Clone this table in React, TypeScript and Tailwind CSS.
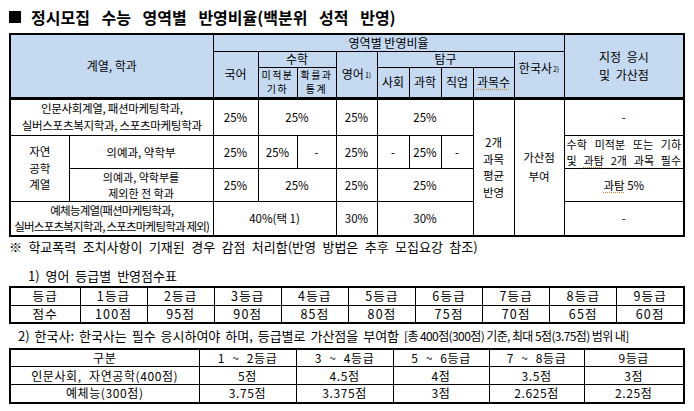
const font = "font-['Noto_Sans_CJK_KR',sans-serif]";
const td = 'border border-black text-center align-middle p-0 font-normal';
const th = 'border border-black text-center align-middle p-0 font-normal bg-[#c5d9f1]';
const dbl = 'border-b-[3px] border-b-double';

const engGrades = ['1등급', '2등급', '3등급', '4등급', '5등급', '6등급', '7등급', '8등급', '9등급'];
const engScores = ['100점', '95점', '90점', '85점', '80점', '75점', '70점', '65점', '60점'];

const khRows = [
  ['구분', '1 ~ 2등급', '3 ~ 4등급', '5 ~ 6등급', '7 ~ 8등급', '9등급'],
  ['인문사회, 자연공학(400점)', '5점', '4.5점', '4점', '3.5점', '3점'],
  ['예체능(300점)', '3.75점', '3.375점', '3점', '2.625점', '2.25점'],
];

function Sup({ children }: { children: string }) {
  return <sup className="text-[7px] relative -top-[1px] ml-[1px]">{children}</sup>;
}

function MainTable() {
  const widths = ['w-[59px]', 'w-[144px]', 'w-[45px]', 'w-[39px]', 'w-[39px]', 'w-[41px]', 'w-[32px]', 'w-[32px]', 'w-[32px]', 'w-[41px]', 'w-[50px]', 'w-[120px]'];
  return (
    <table className="table-fixed border-collapse border-2 border-black w-[674px] ml-[9px] text-[11.5px] leading-[14px]">
      <colgroup>
        {widths.map((w, i) => (
          <col key={i} className={w} />
        ))}
      </colgroup>
      <thead>
        <tr className="h-[17px]">
          <th colSpan={2} rowSpan={3} className={`${th} ${dbl} text-[12px]`}>계열, 학과</th>
          <th colSpan={9} className={`${th} text-[12px]`}>영역별 반영비율</th>
          <th rowSpan={3} className={`${th} ${dbl} text-[12px] leading-[18px] [word-spacing:3px]`}>
            지정 응시
            <br />및 가산점
          </th>
        </tr>
        <tr className="h-[16px]">
          <th rowSpan={2} className={`${th} ${dbl} text-[12px]`}>국어</th>
          <th colSpan={2} className={`${th} text-[12px]`}>수학</th>
          <th rowSpan={2} className={`${th} ${dbl} text-[12px]`}>
            영어<Sup>1)</Sup>
          </th>
          <th colSpan={4} className={`${th} text-[12px]`}>탐구</th>
          <th rowSpan={2} className={`${th} ${dbl} text-[12px] align-top pt-[9px]`}>
            한국사<Sup>2)</Sup>
          </th>
        </tr>
        <tr className="h-[29px]">
          <th className={`${th} ${dbl} text-[10px] leading-[14.5px] tracking-[1.5px]`}>
            미적분
            <br />기하
          </th>
          <th className={`${th} ${dbl} text-[10px] leading-[14.5px] tracking-[1.5px]`}>
            확률과
            <br />통계
          </th>
          <th className={`${th} ${dbl} text-[12px]`}>사회</th>
          <th className={`${th} ${dbl} text-[12px]`}>과학</th>
          <th className={`${th} ${dbl} text-[12px]`}>직업</th>
          <th className={`${th} ${dbl} text-[12px]`}>
            <span className="underline decoration-dotted decoration-[#c8873a] underline-offset-2">과목수</span>
          </th>
        </tr>
      </thead>
      <tbody>
        <tr className="h-[37px]">
          <td colSpan={2} className={`${td} leading-[16.8px] tracking-[-0.3px]`}>
            인문사회계열, 패션마케팅학과,
            <br />
            실버스포츠복지학과, 스포츠마케팅학과
          </td>
          <td className={td}>25%</td>
          <td colSpan={2} className={td}>25%</td>
          <td className={td}>25%</td>
          <td colSpan={3} className={td}>25%</td>
          <td rowSpan={4} className={`${td} leading-[16.8px]`}>
            2개
            <br />과목
            <br />평균
            <br />반영
          </td>
          <td rowSpan={4} className={`${td} leading-[19px]`}>
            가산점
            <br />부여
          </td>
          <td className={td}>-</td>
        </tr>
        <tr className="h-[32px]">
          <td rowSpan={2} className={`${td} leading-[16.8px]`}>
            자연
            <br />공학
            <br />계열
          </td>
          <td className={td}>의예과, 약학부</td>
          <td className={td}>25%</td>
          <td className={td}>25%</td>
          <td className={td}>-</td>
          <td className={td}>25%</td>
          <td className={td}>-</td>
          <td className={td}>25%</td>
          <td className={td}>-</td>
          <td className={`${td} px-[2px] text-[11px] leading-[16px] text-justify [text-align-last:justify]`}>
            수학 미적분 또는 기하
            <br />및 <span className="underline decoration-dotted decoration-[#c8873a] underline-offset-2">과탐</span> 2개 과목 필수
          </td>
        </tr>
        <tr className="h-[32px]">
          <td className={`${td} text-[11px] leading-[16px]`}>
            의예과, 약학부를
            <br />
            제외한 전 학과
          </td>
          <td className={td}>25%</td>
          <td colSpan={2} className={td}>25%</td>
          <td className={td}>25%</td>
          <td colSpan={3} className={td}>25%</td>
          <td className={td}>
            <span className="underline decoration-dotted decoration-[#c8873a] underline-offset-2">과탐</span> 5%
          </td>
        </tr>
        <tr className="h-[35px]">
          <td colSpan={2} className={`${td} leading-[16.8px] tracking-[-0.8px]`}>
            예체능계열(패션마케팅학과,
            <br />
            실버스포츠복지학과, 스포츠마케팅학과 제외)
          </td>
          <td colSpan={3} className={td}>40%(택 1)</td>
          <td className={td}>30%</td>
          <td colSpan={3} className={td}>30%</td>
          <td className={td}>-</td>
        </tr>
      </tbody>
    </table>
  );
}

function EnglishTable() {
  return (
    <table className="table-fixed border-collapse border-2 border-black w-[676px] ml-[9px] text-[12.5px] leading-[16px] tracking-[1.2px]">
      <tbody>
        <tr className="h-[18px]">
          <td className={`${td} w-[70px]`}>등급</td>
          {engGrades.map((g) => (
            <td key={g} className={td}>{g}</td>
          ))}
        </tr>
        <tr className="h-[17px]">
          <td className={td}>점수</td>
          {engScores.map((s) => (
            <td key={s} className={td}>{s}</td>
          ))}
        </tr>
      </tbody>
    </table>
  );
}

function HistoryTable() {
  const widths = ['w-[189px]', 'w-[97px]', 'w-[97px]', 'w-[96px]', 'w-[95px]', 'w-[100px]'];
  return (
    <table className="table-fixed border-collapse border-2 border-black w-[674px] ml-[9px] text-[12px] leading-[16px] tracking-[0.6px]">
      <colgroup>
        {widths.map((w, i) => (
          <col key={i} className={w} />
        ))}
      </colgroup>
      <tbody>
        {khRows.map((r, i) => (
          <tr key={i} className="h-[18px]">
            {r.map((c, j) => (
              <td key={j} className={`${td} [word-spacing:4px]`}>{c}</td>
            ))}
          </tr>
        ))}
      </tbody>
    </table>
  );
}

export default function App() {
  return (
    <div className={`${font} w-[694px] h-[411px] bg-white text-black overflow-hidden`}>
      <div className="h-[33px] flex items-center pl-[9px] text-[16px] font-bold [word-spacing:8px]">
        <span className="inline-block w-[12px] h-[12px] bg-black mr-[10px]" />
        정시모집 수능 영역별 반영비율(백분위 성적 반영)
      </div>
      <MainTable />
      <div className="h-[20px] leading-[20px] pl-[9px] text-[13px] [word-spacing:3.5px]">
        ※ 학교폭력 조치사항이 기재된 경우 감점 처리함(반영 방법은 추후 모집요강 참조)
      </div>
      <div className="h-[29px] pt-[10px] leading-[18px] pl-[28px] text-[13px] [word-spacing:3px]">1) 영어 등급별 반영점수표</div>
      <EnglishTable />
      <div className="h-[24px] leading-[24px] pl-[18px] text-[13px] whitespace-nowrap [word-spacing:2px]">
        2) 한국사: 한국사는 필수 응시하여야 하며, 등급별로 가산점을 부여함{' '}
        <span className="text-[12px] tracking-[-0.6px] [word-spacing:0px]">[총 400점(300점) 기준, 최대 5점(3.75점) 범위 내]</span>
      </div>
      <HistoryTable />
    </div>
  );
}
